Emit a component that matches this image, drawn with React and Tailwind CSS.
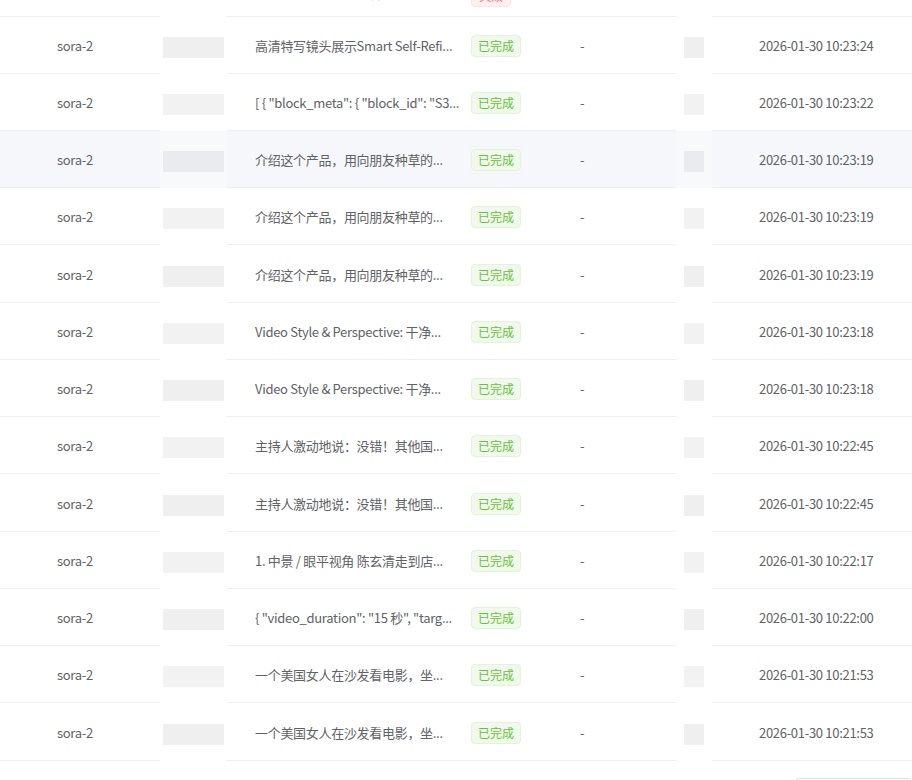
import React from "react";

const rows = [
  { prompt: "高清特写镜头展示Smart Self-Refi...", time: "2026-01-30 10:23:24", h: "h-[57px]" },
  { prompt: "[ { \"block_meta\": { \"block_id\": \"S3...", time: "2026-01-30 10:23:22", h: "h-[57px]" },
  { prompt: "介绍这个产品，用向朋友种草的...", time: "2026-01-30 10:23:19", h: "h-[57px]", hover: true },
  { prompt: "介绍这个产品，用向朋友种草的...", time: "2026-01-30 10:23:19", h: "h-[57px]" },
  { prompt: "介绍这个产品，用向朋友种草的...", time: "2026-01-30 10:23:19", h: "h-[58px]" },
  { prompt: "Video Style & Perspective: 干净...", time: "2026-01-30 10:23:18", h: "h-[57px]" },
  { prompt: "Video Style & Perspective: 干净...", time: "2026-01-30 10:23:18", h: "h-[57px]" },
  { prompt: "主持人激动地说：没错！其他国...", time: "2026-01-30 10:22:45", h: "h-[57px]" },
  { prompt: "主持人激动地说：没错！其他国...", time: "2026-01-30 10:22:45", h: "h-[58px]" },
  { prompt: "1. 中景 / 眼平视角 陈玄清走到店...", time: "2026-01-30 10:22:17", h: "h-[57px]" },
  { prompt: "{ \"video_duration\": \"15 秒\", \"targ...", time: "2026-01-30 10:22:00", h: "h-[57px]" },
  { prompt: "一个美国女人在沙发看电影，坐...", time: "2026-01-30 10:21:53", h: "h-[57px]" },
  { prompt: "一个美国女人在沙发看电影，坐...", time: "2026-01-30 10:21:53", h: "h-[58px]" },
];

function Row({ row }) {
  return (
    <div
      className={`flex items-center pt-[2px] border-b border-[#ebeef5] ${row.h} ${
        row.hover ? "bg-[#f5f7fa]" : "bg-white"
      }`}
    >
      <div className="w-[243px] pl-[57px] shrink-0">sora-2</div>
      <div className="w-[216px] pl-[12px] shrink-0 whitespace-nowrap">
        {row.prompt}
      </div>
      <div className="w-[109px] pl-[12px] shrink-0">
        <span className="inline-flex items-center justify-center w-[50px] h-[22px] rounded-[4px] border border-[#e1f3d8] bg-[#f0f9eb] text-[12px] tracking-normal text-[#67c23a]">
          已完成
        </span>
      </div>
      <div className="w-[179px] pl-[12px] shrink-0">-</div>
      <div className="pl-[12px] whitespace-nowrap">{row.time}</div>
    </div>
  );
}

function Strip({ left, patch }) {
  return (
    <div className={`absolute top-0 flex flex-col ${left}`}>
      <div className="h-[17px] bg-white" />
      {rows.map((row, i) => (
        <div
          key={i}
          className={`flex items-center justify-center ${row.h} ${
            row.hover ? "bg-[#f8f9fb]" : "bg-white"
          }`}
        >
          <div
            className={`${patch} h-[21px] mt-[4px] ${
              row.hover ? "bg-[#e9ebef]" : i % 2 ? "bg-[#f2f2f2]" : "bg-[#efefef]"
            }`}
          />
        </div>
      ))}
    </div>
  );
}

export default function App() {
  return (
    <div className="w-[912px] h-[780px] overflow-hidden bg-white text-[13px] tracking-[-0.3px] text-[#606266] font-['Noto_Sans_CJK_SC','Noto_Sans',sans-serif]">
      <div className="relative">
        <div className="h-[17px] overflow-hidden border-b border-[#ebeef5]">
          <div className="flex items-center h-[57px] -mt-[36px]">
            <div className="w-[243px] shrink-0" />
            <div className="w-[216px] pl-[12px] shrink-0 whitespace-nowrap overflow-hidden">
              一段很长的提示词内容描述镜头画面...
            </div>
            <div className="w-[109px] pl-[12px] shrink-0 mt-[6px]">
              <span className="inline-flex items-center justify-center w-[40px] h-[22px] rounded-[4px] border border-[#fde2e2] bg-[#fef0f0] text-[12px] text-[#f56c6c]">
                失败
              </span>
            </div>
          </div>
        </div>
        {rows.map((row, i) => (
          <Row key={i} row={row} />
        ))}
        <Strip left="left-[160px] w-[67px]" patch="w-[61px]" />
        <Strip left="left-[676px] w-[36px]" patch="w-[20px]" />
      </div>
      <div className="flex justify-end mt-[17px]">
        <div className="w-[117px] h-[28px] border border-[#dcdfe6] rounded-[4px]" />
      </div>
    </div>
  );
}
